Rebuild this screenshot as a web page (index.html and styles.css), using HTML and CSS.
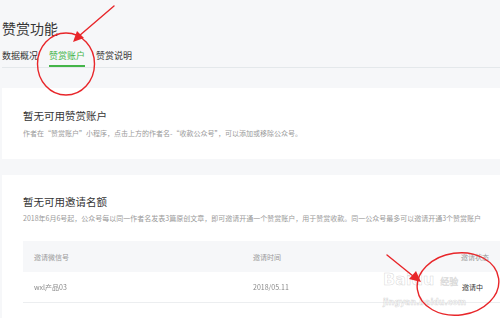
FILE: index.html
```html
<!DOCTYPE html>
<html lang="zh">
<head>
<meta charset="utf-8">
<link rel="stylesheet" href="styles.css">
</head>
<body>
<div class="page">
  <h1 class="title">赞赏功能</h1>
  <nav class="tabs">
    <span class="tab">数据概况</span>
    <span class="tab active">赞赏账户</span>
    <span class="tab">赞赏说明</span>
  </nav>

  <section class="card card-a">
    <h2 class="card-title">暂无可用赞赏账户</h2>
    <p class="card-desc">作者在“赞赏账户”小程序，点击上方的作者名-“收款公众号”，可以添加或移除公众号。</p>
  </section>

  <section class="card card-b">
    <h2 class="card-title">暂无可用邀请名额</h2>
    <p class="card-desc">2018年6月6号起，公众号每以同一作者名发表3篇原创文章，即可邀请开通一个赞赏账户，用于赞赏收款。同一公众号最多可以邀请开通3个赞赏账户</p>
    <div class="table">
      <div class="row head">
        <span>邀请微信号</span>
        <span>邀请时间</span>
        <span>邀请状态</span>
      </div>
      <div class="row body">
        <span class="blur">wxl产品03</span>
        <span class="blur">2018/05.11</span>
        <span class="status">邀请中</span>
      </div>
    </div>
  </section>
</div>

<div class="watermark">
  <span class="wm-bai">Bai</span><span class="wm-du">du</span><span class="wm-cn">经验</span>
  <span class="wm-url">jingyan.baidu.com</span>
</div>

<svg class="marks" width="500" height="318" viewBox="0 0 500 318">
  <g fill="none" stroke="#e8262a" stroke-width="1.4" stroke-linecap="round">
    <line x1="114" y1="6" x2="79" y2="36"/>
    <ellipse cx="66" cy="64" rx="28.5" ry="31"/>
    <line x1="387" y1="255" x2="413" y2="276"/>
    <ellipse cx="458" cy="284" rx="41" ry="31" transform="rotate(-8 458 284)"/>
  </g>
  <g fill="#e8262a">
    <polygon points="73,42 77,31 84,38"/>
    <polygon points="421,282 409,279 416,271"/>
  </g>
</svg>
</body>
</html>
```

FILE: styles.css
```css
html, body {
  margin: 0;
  padding: 0;
  width: 500px;
  height: 318px;
  overflow: hidden;
  background: #f6f7f9;
  font-family: "Noto Sans CJK SC", "Noto Sans", sans-serif;
  color: #353535;
}

.page {
  padding: 18px 0 0 2px;
  position: relative;
}

.title {
  margin: 0;
  font-size: 14px;
  line-height: 20px;
  font-weight: 400;
  color: #353535;
}

.tabs {
  display: flex;
  gap: 11px;
  margin-top: 12px;
  height: 17px;
  border-bottom: 1px solid #e4e8eb;
}

.tab {
  font-size: 9px;
  line-height: 12px;
  padding: 0 0 4px 0;
  color: #353535;
  border-bottom: 2px solid transparent;
}

.tab.active {
  color: #44b549;
  border-bottom-color: #44b549;
}

.card {
  background: #fff;
  padding: 21px 0 21px 21px;
  overflow: hidden;
}

.card-a {
  margin-top: 20px;
}

.card-b {
  margin-top: 16px;
  padding-top: 20px;
  padding-bottom: 40px;
}

.card-title {
  margin: 0;
  font-size: 10.5px;
  line-height: 14px;
  font-weight: 400;
  color: #353535;
}

.card-desc {
  margin: 5px 0 0 0;
  font-size: 7px;
  line-height: 10px;
  color: #9a9a9a;
  white-space: nowrap;
}

.card-b .card-desc {
  margin-top: 4px;
}

.table {
  margin-top: 18px;
}

.row {
  display: grid;
  grid-template-columns: 219px 208px 1fr;
  padding-left: 11px;
  font-size: 7px;
  align-items: center;
  white-space: nowrap;
}

.row.head {
  height: 31px;
  background: #f6f7f9;
  color: #9a9a9a;
}

.row.body {
  height: 30px;
  border-bottom: 1px solid #eceef0;
  color: #888;
}

.blur {
  filter: blur(0.7px);
}

.status {
  color: #353535;
  padding-left: 1px;
}

.watermark {
  position: absolute;
  left: 383px;
  top: 270px;
  width: 78px;
  height: 40px;
  font-family: "DejaVu Sans", "Noto Sans CJK SC", sans-serif;
  color: rgba(255, 255, 255, 0.6);
  -webkit-text-stroke: 0.5px rgba(180, 180, 180, 0.55);
  pointer-events: none;
  white-space: nowrap;
}

.wm-bai, .wm-du {
  font-size: 16px;
  font-weight: 700;
  line-height: 20px;
}

.wm-cn {
  font-size: 9px;
  margin-left: 6px;
  line-height: 20px;
}

.wm-url {
  display: block;
  font-size: 8px;
  font-weight: 700;
  line-height: 12px;
  margin-top: 5px;
}

.marks {
  position: absolute;
  left: 0;
  top: 0;
  pointer-events: none;
}
```
